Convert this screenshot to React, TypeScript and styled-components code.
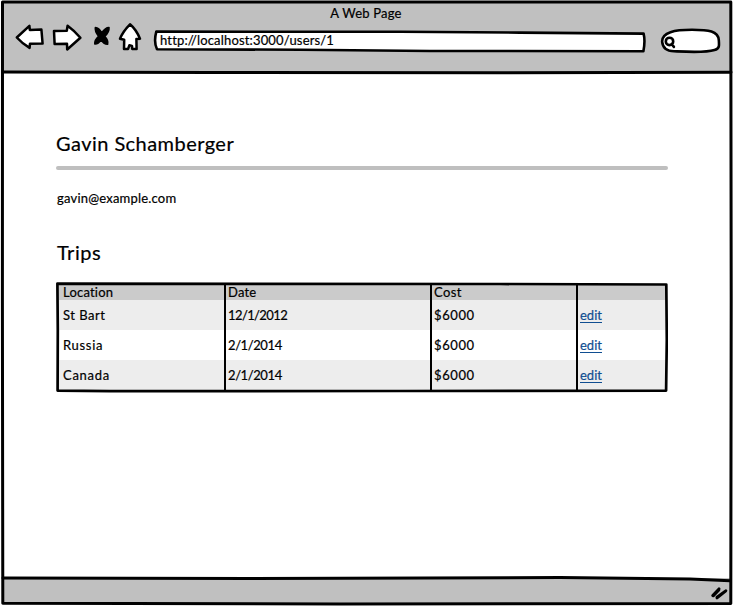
import React from "react";
import styled, { createGlobalStyle } from "styled-components";

const Global = createGlobalStyle`
  *, *::before, *::after { box-sizing: border-box; }
  body { margin: 0; background: #fff; }
`;

const Window = styled.div`
  position: relative;
  display: flex;
  flex-direction: column;
  width: 733px;
  height: 606px;
  padding: 2px 3px 3px;
  overflow: hidden;
  background: #fff;
  color: #000;
  font: 13px/18px Lato, "Noto Sans", sans-serif;
  -webkit-text-stroke: 0.2px;
`;

const Outline = styled.svg`
  position: absolute;
  inset: 0;
  width: 100%;
  height: 100%;
  pointer-events: none;
  fill: none;
  stroke: #000;
  stroke-width: 3px;
  stroke-linejoin: round;
  stroke-linecap: round;
`;

const Label = styled.span<{ $track?: number }>`
  display: inline-block;
  white-space: nowrap;
  letter-spacing: ${(p) => p.$track ?? 0}px;
`;

const Header = styled.header`
  flex: none;
  height: 70px;
  background: #c0c0c0;
`;

const WindowTitle = styled.div`
  height: 20px;
  padding: 2px 1px 0 0;
  text-align: center;
`;

const Toolbar = styled.div`
  display: flex;
  align-items: flex-start;
  height: 44px;
  padding-left: 10px;
`;

const Icons = styled.svg`
  flex: none;
  width: 132px;
  height: 36px;
  fill: #fff;
  stroke: #000;
  stroke-width: 2.5px;
  stroke-linejoin: round;
  stroke-linecap: round;
`;

const Address = styled.div`
  position: relative;
  flex: none;
  width: 493px;
  height: 24px;
  margin: 7px 0 0 8px;
  padding: 2px 0 0 7px;
`;

const Search = styled.div`
  position: relative;
  flex: none;
  width: 62px;
  height: 26px;
  margin: 6px 0 0 13px;
`;

const FieldShape = styled.svg`
  position: absolute;
  inset: 0;
  width: 100%;
  height: 100%;
  fill: #fff;
  stroke: #000;
  stroke-width: 2.6px;
  stroke-linejoin: round;
  stroke-linecap: round;
`;

const AddressText = styled(Label)`
  position: relative;
`;

const Content = styled.main`
  flex: 1;
  padding: 57px 62px 0 53px;
`;

const Heading = styled.h1`
  height: 37px;
  margin: 0;
  font-size: 20px;
  line-height: 28px;
  font-weight: 400;
`;

const Rule = styled.div`
  width: 612px;
  height: 4px;
  border-radius: 2px;
  background: #bfbfbf;
`;

const Email = styled.p`
  height: 18px;
  margin: 19px 0 33px 1px;
`;

const Subheading = styled.h2`
  height: 42px;
  margin: 0 0 0 1px;
  font-size: 20px;
  line-height: 24px;
  font-weight: 400;
`;

const TableFrame = styled.div`
  position: relative;
  width: 612px;
  height: 111px;
  padding: 2px 2px 3px 2px;
`;

const Table = styled.div`
  display: grid;
  grid-template-rows: 16px repeat(3, 30px);
`;

const Row = styled.div<{ $tone: string; $heading?: boolean }>`
  display: grid;
  grid-template-columns: 167px 206px 146px 89px;
  align-items: center;
  line-height: ${(p) => (p.$heading ? 16 : 18)}px;
  background: ${(p) => p.$tone};
`;

const Cell = styled.div<{ $inset: number }>`
  padding-left: ${(p) => p.$inset}px;
`;

const EditLink = styled.a`
  display: inline-block;
  height: 16px;
  line-height: 16px;
  border-bottom: 1px solid #104e91;
  color: #104e91;
  text-decoration: none;
`;

const Footer = styled.footer`
  flex: none;
  height: 25px;
  background: #c0c0c0;
`;

const head: [string, number][] = [["Location", 0.2], ["Date", 0.2], ["Cost", 0.4], ["", 0]];
const trips: [string, number][][] = [
  [["St Bart", 0.5], ["12/1/2012", -0.6], ["$6000", 0.6]],
  [["Russia", 0.7], ["2/1/2014", -0.4], ["$6000", 0.6]],
  [["Canada", 0.7], ["2/1/2014", -0.4], ["$6000", 0.6]],
];
const insets = [5, 3, 3, 3];

export default function App() {
  return (
    <>
      <Global />
      <Window>
        <Header>
          <WindowTitle><Label $track={0.2}>A Web Page</Label></WindowTitle>
          <Toolbar>
            <Icons viewBox="13 21.7 132 36" aria-hidden="true">
              <path d="M16.8 37.2 29.4 25.6 29.8 29.6 41.4 29.2 42.6 43.2 30 43.4 29.6 47.6Q22 43 16.8 37.2Z" />
              <path d="M54 30.6 66.8 30.4 67.6 25.4Q74 30 80.4 37.4L67.2 49.2 67 43.4 54.6 43.6Z" />
              <path
                d="M95.4 27.2Q99 27.4 101.6 32.6 105.6 27 109 27.2 109.4 32 104.6 36 108.6 40 107.6 44 103.4 44 101.2 39.4 98 44 94.8 43.6 94.6 39.4 98.6 36 94.6 31 95.4 27.2Z"
                fill="#000"
                strokeWidth="1.6"
              />
              <path d="M130 24Q136 29 140 38.4L136.4 38.6 136.6 48.8 132.2 48.6 132 45.6 129.4 45 128 48.8 124 48.8 124.2 39.4 120 38.4Q123 31 130 24Z" />
            </Icons>
            <Address>
              <FieldShape viewBox="153 29 493 24" aria-hidden="true">
                <path d="M156.3 31.6 400 31.8 520 32.6 643.6 33.6Q645.4 41 643.4 51.2L430 51 300 49.7 157 49.3Q153.5 42 156.3 31.6Z" />
              </FieldShape>
              <AddressText $track={0.16}>http://localhost:3000/users/1</AddressText>
            </Address>
            <Search>
              <FieldShape viewBox="659 28 62 26" aria-hidden="true">
                <path d="M662.2 42C661.5 32 675 29.8 692 29.8S718 31 718.8 40C719.3 46 719.5 48.6 714.5 50 705 53 690 52 674 51.2 666 51 662.7 48 662.2 42Z" />
                <path d="M673.2 41.4A3.7 3.7 0 1 1 665.8 41.4 3.7 3.7 0 1 1 673.2 41.4ZM671.6 44 673.9 46.9" />
              </FieldShape>
            </Search>
          </Toolbar>
        </Header>
        <Content>
          <Heading><Label $track={0.45}>Gavin Schamberger</Label></Heading>
          <Rule />
          <Email><Label $track={0.2}>gavin@example.com</Label></Email>
          <Subheading><Label $track={0.5}>Trips</Label></Subheading>
          <TableFrame>
            <Table>
              <Row $tone="#cbcbcb" $heading>
                {head.map(([text, track], i) => (
                  <Cell key={i} $inset={insets[i]}><Label $track={track}>{text}</Label></Cell>
                ))}
              </Row>
              {trips.map((trip, r) => (
                <Row key={r} $tone={r % 2 ? "#fff" : "#ededed"}>
                  {trip.map(([text, track], i) => (
                    <Cell key={i} $inset={insets[i]}><Label $track={track}>{text}</Label></Cell>
                  ))}
                  <Cell $inset={insets[3]}><EditLink>edit</EditLink></Cell>
                </Row>
              ))}
            </Table>
            <Outline viewBox="56 282 612 111" aria-hidden="true">
              <path strokeWidth="2.7" d="M57.4 283.6 250 283.9 500 284 666.3 284.5 666.8 340 666.1 390.6 400 391 110 391.2 57.6 390.6 57.8 330Z" />
              <path strokeWidth="2" d="M225 284V391M431 284V391M577 284V391" />
            </Outline>
          </TableFrame>
        </Content>
        <Footer />
        <Outline viewBox="0 0 733 606" aria-hidden="true">
          <path d="M2.5 1.9 350 2 730.8 2 731.2 300 730.8 603.5 340 604 2.8 603.2 2.4 300Z" />
          <path d="M3 72 210 72.5 500 72.8 731 72.2M3 577.9 250 578.6 560 577.6 690 579.1 730 580.8" />
          <path d="M712.8 595.6 719 588.9M713.6 595.6 718.8 590M717 597.8 725.8 590.8M717 597.2 725 591.4" />
        </Outline>
      </Window>
    </>
  );
}
